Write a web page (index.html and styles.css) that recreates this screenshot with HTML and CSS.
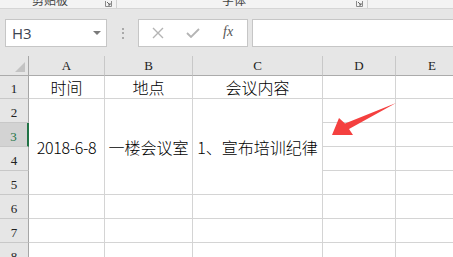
FILE: index.html
```html
<!DOCTYPE html>
<html lang="zh-CN">
<head>
  <meta charset="UTF-8" />
  <title>Excel</title>
  <link rel="stylesheet" href="styles.css">
</head>
<body>
  <div class="ribbon">
    <div class="group g1">
      <span class="glabel">剪贴板</span>
      <span class="launch"><svg width="7" height="6" viewBox="0 0 7 6"><path d="M0.5 0v5.5h6V0" fill="none" stroke="#8a8a8a"/><path d="M2 1l3 3M5 2v2H3" fill="none" stroke="#666"/></svg></span>
    </div>
    <div class="group g2">
      <span class="glabel">字体</span>
      <span class="launch"><svg width="7" height="6" viewBox="0 0 7 6"><path d="M0.5 0v5.5h6V0" fill="none" stroke="#8a8a8a"/><path d="M2 1l3 3M5 2v2H3" fill="none" stroke="#666"/></svg></span>
    </div>
    <div class="group g3"></div>
  </div>

  <div class="toolbar">
    <div class="namebox">
      <span class="cellref">H3</span>
      <span class="drop"></span>
    </div>
    <div class="grip"><i></i><i></i><i></i></div>
    <div class="fbuttons">
      <svg class="ico" width="12" height="12" viewBox="0 0 12 12"><path d="M1 1l10 10M11 1L1 11" stroke="#b4b4b4" stroke-width="1.4"/></svg>
      <svg class="ico" width="14" height="10" viewBox="0 0 14 10"><path d="M1 5l4 4 8-8" fill="none" stroke="#b4b4b4" stroke-width="1.8"/></svg>
      <span class="fx">fx</span>
    </div>
    <div class="finput"></div>
  </div>

  <div class="sheet">
    <div class="ch corner"><span class="tri"></span></div>
    <div class="ch">A</div>
    <div class="ch">B</div>
    <div class="ch">C</div>
    <div class="ch">D</div>
    <div class="ch">E</div>

    <div class="rh">1</div>
    <div class="c">时间</div>
    <div class="c">地点</div>
    <div class="c">会议内容</div>
    <div class="c"></div>
    <div class="c"></div>

    <div class="rh">2</div>
    <div class="c merge"><span class="num">2018-6-8</span></div>
    <div class="c merge">一楼会议室</div>
    <div class="c merge">1、宣布培训纪律</div>
    <div class="c"></div>
    <div class="c"></div>

    <div class="rh active">3</div>
    <div class="c"></div>
    <div class="c"></div>

    <div class="rh">4</div>
    <div class="c"></div>
    <div class="c"></div>

    <div class="rh">5</div>
    <div class="c"></div>
    <div class="c"></div>

    <div class="rh">6</div>
    <div class="c"></div><div class="c"></div><div class="c"></div><div class="c"></div><div class="c"></div>

    <div class="rh">7</div>
    <div class="c"></div><div class="c"></div><div class="c"></div><div class="c"></div><div class="c"></div>

    <div class="rh">8</div>
    <div class="c"></div><div class="c"></div><div class="c"></div><div class="c"></div><div class="c"></div>
  </div>

  <svg class="arrow" width="453" height="257" viewBox="0 0 453 257">
    <polygon points="332,135 339,118 345,123.5 396,103 349,129 353,135" fill="#f4403f"/>
  </svg>
</body>
</html>
```

FILE: styles.css
```css
body {
  margin: 0;
  width: 453px;
  height: 257px;
  overflow: hidden;
  background: #e6e6e6;
  position: relative;
  font-family: "Noto Sans CJK SC", sans-serif;
}
.ribbon {
  height: 8px;
  display: flex;
  background: #f3f3f3;
  border-bottom: 1px solid #d5d5d5;
  overflow: hidden;
}
.group {
  display: flex;
  border-right: 1px solid #d2d2d2;
}
.g1 { width: 116px; }
.g2 { width: 250px; }
.g3 { flex: 1; border-right: none; }
.glabel {
  flex: 1;
  text-align: center;
  font-size: 12px;
  line-height: 12px;
  margin-top: -6px;
  color: #444;
}
.launch {
  width: 16px;
  padding-left: 5px;
  box-sizing: border-box;
  line-height: 0;
}
.toolbar {
  height: 47px;
  box-sizing: border-box;
  padding: 10px 0 0 5px;
  display: flex;
  align-items: flex-start;
}
.namebox {
  width: 102px;
  height: 28px;
  box-sizing: border-box;
  background: #fff;
  border: 1px solid #c6c6c6;
  display: flex;
  align-items: center;
  padding: 0 5px 0 6px;
}
.cellref {
  flex: 1;
  font-family: "Open Sans", sans-serif;
  font-size: 15px;
  color: #3c4450;
  margin-top: -1px;
}
.drop {
  width: 0;
  height: 0;
  border-left: 4px solid transparent;
  border-right: 4px solid transparent;
  border-top: 4px solid #7a7a7a;
}
.grip {
  width: 31px;
  height: 28px;
  display: flex;
  flex-direction: column;
  align-items: center;
  justify-content: center;
  gap: 2.5px;
  padding-left: 1px;
  box-sizing: border-box;
}
.grip i {
  width: 2px;
  height: 2px;
  background: #a9a9a9;
}
.fbuttons {
  width: 110px;
  height: 28px;
  box-sizing: border-box;
  background: #fff;
  border: 1px solid #c6c6c6;
  display: flex;
  align-items: center;
  padding-left: 13px;
}
.fbuttons .ico:nth-child(2) {
  margin-left: 22px;
}
.fx {
  margin-left: 23px;
  font-family: "Liberation Serif", serif;
  font-style: italic;
  font-size: 14px;
  color: #555;
  margin-top: -2px;
}
.finput {
  margin-left: 4px;
  flex: 1;
  height: 28px;
  box-sizing: border-box;
  background: #fff;
  border: 1px solid #c6c6c6;
  border-right: none;
}
.sheet {
  display: grid;
  grid-template-columns: 29px 76px 88px 130px 73px 73px;
  grid-template-rows: 20px 23px repeat(7, 24px);
  width: 469px;
}
.sheet > div {
  box-sizing: border-box;
}
.ch {
  background: #e6e6e6;
  border-right: 1px solid #c8c8c8;
  border-bottom: 1px solid #ababab;
  font-family: "Liberation Serif", serif;
  font-size: 13px;
  color: #222;
  text-align: center;
  line-height: 20px;
}
.corner {
  position: relative;
  border-right: 1px solid #a6a6a6;
}
.tri {
  position: absolute;
  right: 3px;
  bottom: 3px;
  width: 0;
  height: 0;
  border-left: 10px solid transparent;
  border-bottom: 10px solid #c3c3c3;
}
.rh {
  grid-column: 1;
  background: #e6e6e6;
  border-right: 1px solid #a6a6a6;
  border-bottom: 1px solid #c8c8c8;
  font-family: "Liberation Serif", serif;
  font-size: 13px;
  color: #222;
  display: flex;
  align-items: flex-end;
  justify-content: center;
  padding-bottom: 1px;
}
.rh.active {
  background: #d3d3d3;
  color: #217346;
  border-right: 2px solid #217346;
}
.c {
  background: #fff;
  border-right: 1px solid #d4d4d4;
  border-bottom: 1px solid #d4d4d4;
  font-size: 16px;
  font-weight: 300;
  color: #000;
  display: flex;
  align-items: center;
  justify-content: center;
  white-space: nowrap;
}
.merge {
  grid-row: span 4;
}
.num {
  letter-spacing: -0.3px;
}
.arrow {
  position: absolute;
  left: 0;
  top: 0;
  pointer-events: none;
}
```
